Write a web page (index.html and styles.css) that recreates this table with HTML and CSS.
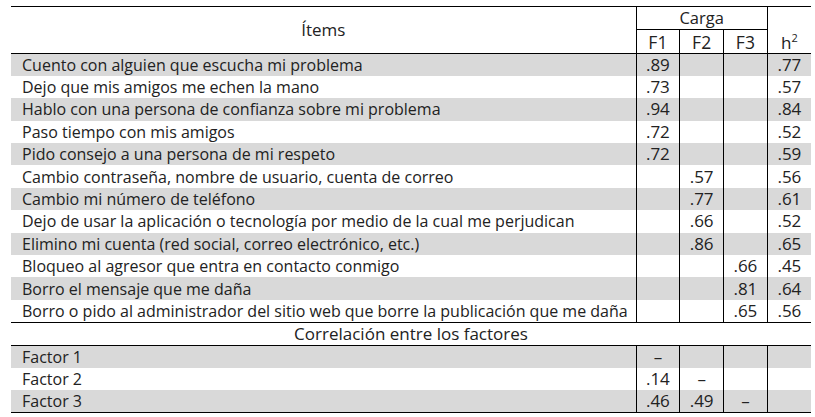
FILE: index.html
```html
<!DOCTYPE html>
<html lang="es">
<head>
<meta charset="utf-8">
<link rel="stylesheet" href="styles.css">
</head>
<body>
<div class="page">
<table class="factors">
  <colgroup>
    <col class="c-item"><col class="c-num"><col class="c-num"><col class="c-num"><col class="c-num">
  </colgroup>
  <thead>
    <tr class="h1">
      <th rowspan="2" class="items-h">Ítems</th>
      <th colspan="3" class="carga">Carga</th>
      <th rowspan="2" class="h2col">h<sup>2</sup></th>
    </tr>
    <tr class="h2">
      <th class="f">F1</th><th class="f">F2</th><th class="f">F3</th>
    </tr>
  </thead>
  <tbody class="items">
    <tr class="g"><td class="t">Cuento con alguien que escucha mi problema</td><td>.89</td><td></td><td></td><td>.77</td></tr>
    <tr><td class="t">Dejo que mis amigos me echen la mano</td><td>.73</td><td></td><td></td><td>.57</td></tr>
    <tr class="g"><td class="t">Hablo con una persona de confianza sobre mi problema</td><td>.94</td><td></td><td></td><td>.84</td></tr>
    <tr><td class="t">Paso tiempo con mis amigos</td><td>.72</td><td></td><td></td><td>.52</td></tr>
    <tr class="g"><td class="t">Pido consejo a una persona de mi respeto</td><td>.72</td><td></td><td></td><td>.59</td></tr>
    <tr><td class="t">Cambio contraseña, nombre de usuario, cuenta de correo</td><td></td><td>.57</td><td></td><td>.56</td></tr>
    <tr class="g"><td class="t">Cambio mi número de teléfono</td><td></td><td>.77</td><td></td><td>.61</td></tr>
    <tr><td class="t">Dejo de usar la aplicación o tecnología por medio de la cual me perjudican</td><td></td><td>.66</td><td></td><td>.52</td></tr>
    <tr class="g"><td class="t">Elimino mi cuenta (red social, correo electrónico, etc.)</td><td></td><td>.86</td><td></td><td>.65</td></tr>
    <tr><td class="t">Bloqueo al agresor que entra en contacto conmigo</td><td></td><td></td><td>.66</td><td>.45</td></tr>
    <tr class="g"><td class="t">Borro el mensaje que me daña</td><td></td><td></td><td>.81</td><td>.64</td></tr>
    <tr class="last"><td class="t">Borro o pido al administrador del sitio web que borre la publicación que me daña</td><td></td><td></td><td>.65</td><td>.56</td></tr>
  </tbody>
  <tbody class="corr">
    <tr class="corr-h"><td colspan="5">Correlación entre los factores</td></tr>
    <tr class="g"><td class="t">Factor 1</td><td>–</td><td></td><td></td><td></td></tr>
    <tr><td class="t">Factor 2</td><td>.14</td><td>–</td><td></td><td></td></tr>
    <tr class="g last"><td class="t">Factor 3</td><td>.46</td><td>.49</td><td>–</td><td></td></tr>
  </tbody>
</table>
</div>
</body>
</html>
```
FILE: styles.css
```css
html, body {
  margin: 0;
  padding: 0;
  background: #fff;
}
.page {
  padding: 6px 0 0 11px;
}
.factors {
  border-collapse: collapse;
  table-layout: fixed;
  width: 800px;
  color: #222;
  font-family: "Open Sans", "Noto Sans", sans-serif;
  font-size: 17px;
  line-height: 20px;
}
.c-item { width: 625px; }
.c-num { width: 43.75px; }
.factors th, .factors td {
  padding: 0;
  text-align: center;
  font-weight: normal;
  white-space: nowrap;
  box-sizing: border-box;
}
.factors thead tr.h1 th {
  border-top: 1px solid #000;
  height: 23px;
}
.factors thead tr.h2 th {
  height: 24px;
  border-bottom: 1px solid #000;
}
.items-h {
  font-size: 17px;
  border-bottom: 1px solid #000;
  border-right: 1px solid #000;
}
.carga {
  font-size: 16.5px;
  border-bottom: 1px solid #000;
}
.h2col {
  border-left: 1px solid #000;
  border-bottom: 1px solid #000;
  vertical-align: bottom;
  font-size: 17px;
}
.h2col sup {
  font-size: 11px;
  vertical-align: 7px;
  line-height: 0;
}
.f {
  font-size: 17.5px;
  border-left: 1px solid #000;
  border-right: 1px solid #000;
}
.items td {
  height: 22.4px;
  border-left: 1px solid #000;
}
.items td.t {
  border-left: none;
  text-align: left;
  padding-left: 11px;
  font-size: 16px;
}
.items tr.last td {
  border-bottom: 1px solid #000;
}
.g td {
  background: #d9d9d9;
}
.corr td {
  height: 22.6px;
  border-left: 1px solid #000;
}
.corr td.t {
  border-left: none;
  text-align: left;
  padding-left: 11px;
  font-size: 16px;
}
.corr tr.corr-h td {
  border-left: none;
  border-bottom: 1px solid #000;
  height: 23px;
  font-size: 17px;
}
.corr tr.last td {
  border-bottom: 1px solid #000;
}
```
